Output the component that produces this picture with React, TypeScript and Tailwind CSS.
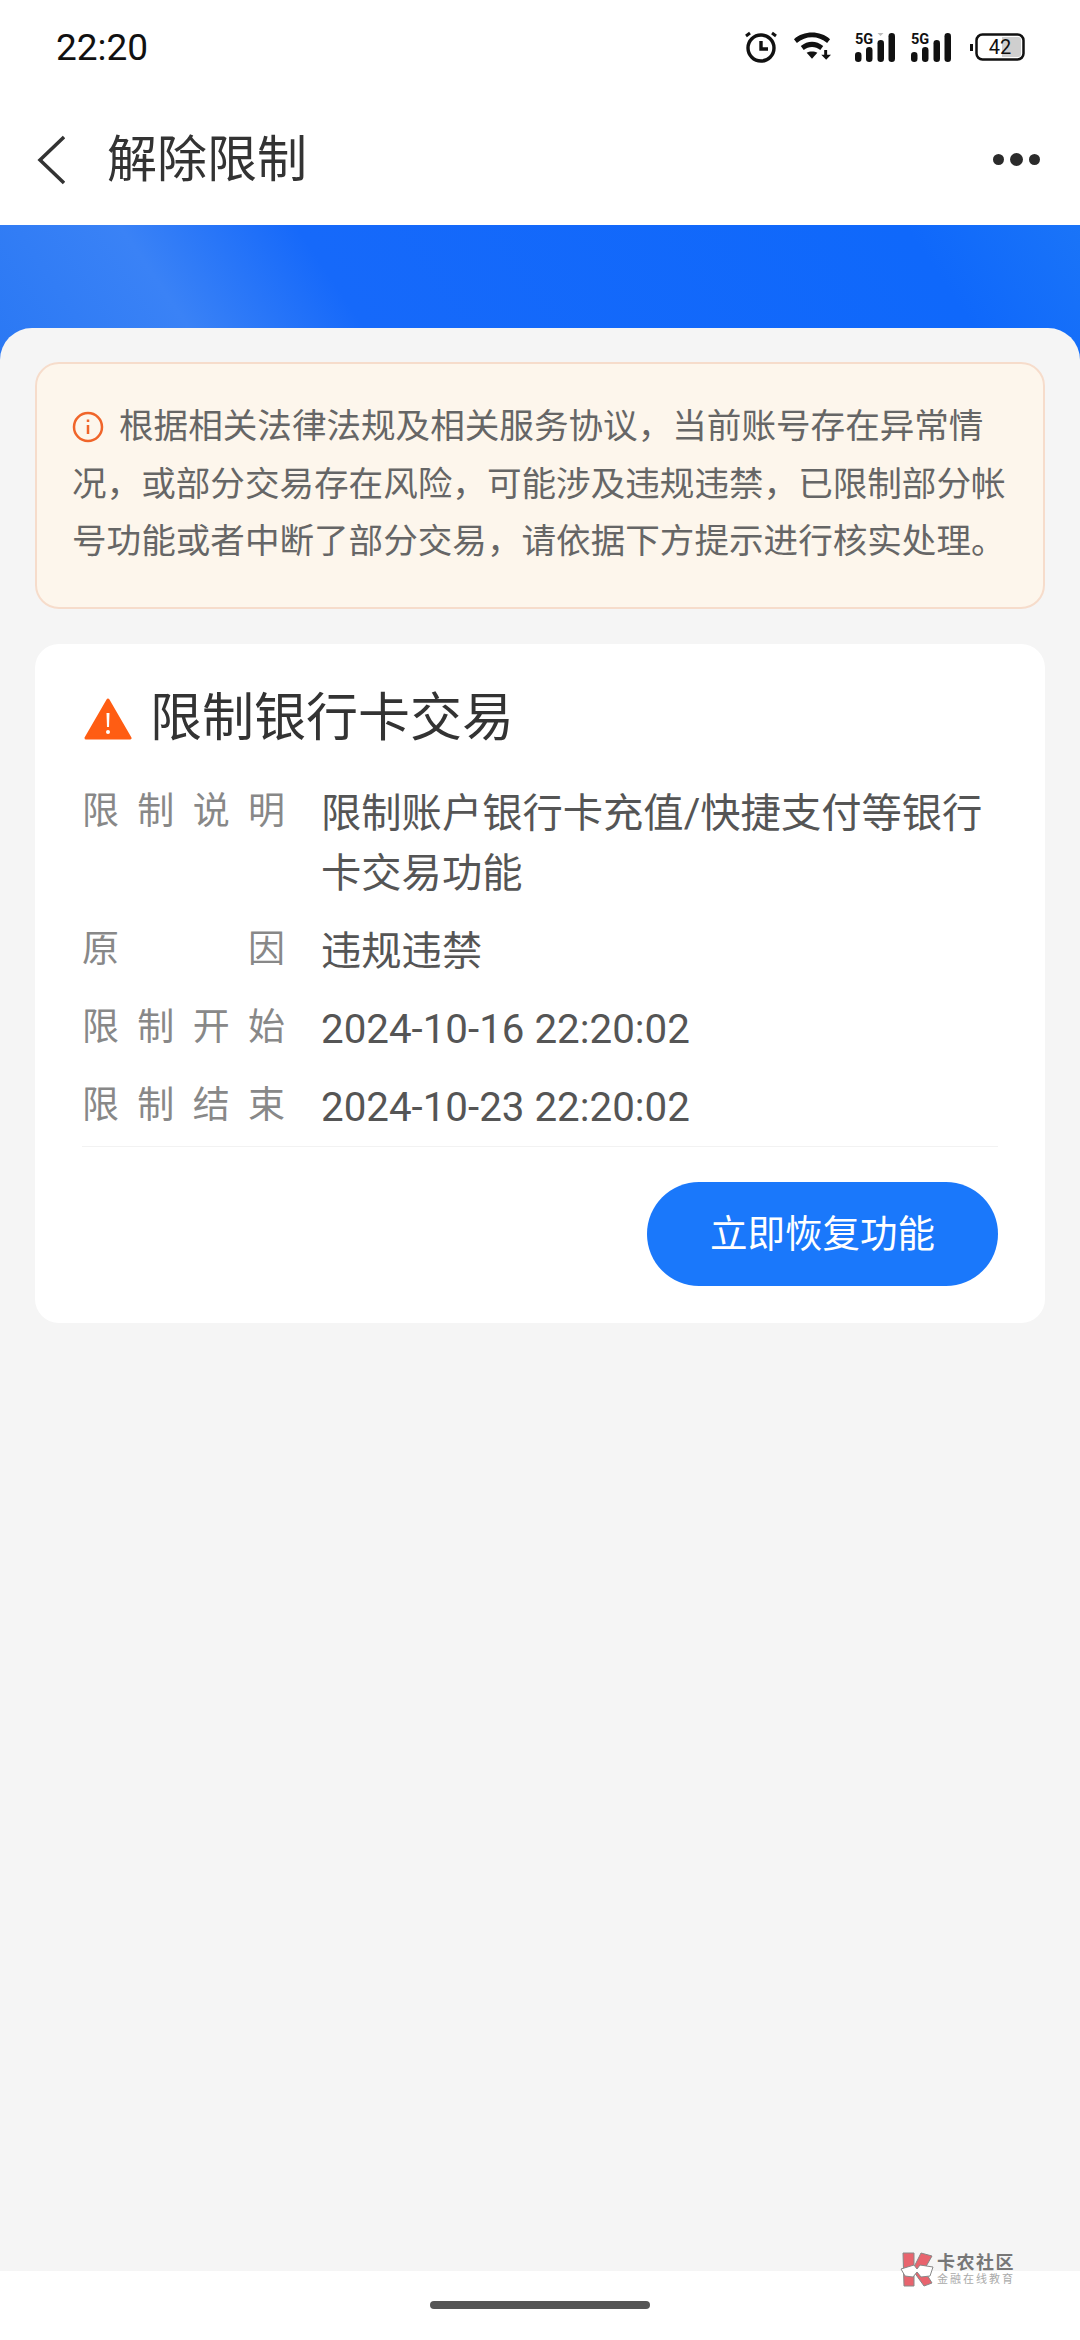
const FONT = "font-['Roboto','Noto_Sans_CJK_SC',sans-serif]";

const ROWS = [
  { label: "限制说明", value: "限制账户银行卡充值/快捷支付等银行卡交易功能" },
  { label: "原因", value: "违规违禁" },
  { label: "限制开始", value: "2024-10-16 22:20:02" },
  { label: "限制结束", value: "2024-10-23 22:20:02" },
];

function Signal({ tri }: { tri?: boolean }) {
  return (
    <svg width="40" height="30" viewBox="0 0 40 30" fill="#111">
      <rect x="0" y="20" width="6.500" height="10" rx="3.200" />
      <rect x="11" y="15" width="6.500" height="15" rx="3.200" />
      <rect x="22.500" y="8" width="6.500" height="22" rx="3.200" />
      <rect x="33.500" y="1" width="6.500" height="29" rx="3.200" />
      {tri && <path d="M22.500 1h6l-3 3z" fill="#bbb" />}
      <text x="0" y="12" fontSize="14.500" fontWeight="700" fontFamily="Roboto">5G</text>
    </svg>
  );
}

function StatusIcons() {
  return (
    <div className="flex items-center">
      <svg width="32" height="32" viewBox="0 0 32 32" fill="none" stroke="#111" className="mr-[16px]">
        <circle cx="16" cy="17" r="13" strokeWidth="3.400" />
        <path d="M16 10v8h7" strokeWidth="3.400" />
        <path d="M1 5l4-3M31 5l-4-3" strokeWidth="3" />
      </svg>
      <svg width="39" height="30" viewBox="0 0 40 30" fill="#111" className="mr-[23px]">
        <path d="M1 7C11-2 28-2 38 7l-3 4C26 3 13 3 4 11z" />
        <path d="M8 14c7-6 16-6 23 0l-3 4c-5-4-12-4-17 0z" />
        <path d="M14 21c3-2 8-2 11 0l-5.500 6z" />
        <path d="M32 18h3v5h4l-5 5-5-5h3z" />
      </svg>
      <Signal tri />
      <div className="w-[16px]" />
      <Signal />
      <div className="w-[19px]" />
      <svg width="55" height="28" viewBox="0 0 55 28" fill="none">
        <rect x="6.500" y="1.500" width="47" height="25" rx="6" stroke="#111" strokeWidth="2.500" />
        <path d="M32 4h16a3 3 0 0 1 3 3v14a3 3 0 0 1-3 3H32z" fill="#cfcfcf" />
        <path d="M0 11h3v7H0z" fill="#111" />
        <text x="30" y="21" textAnchor="middle" fontSize="20" fontFamily="Roboto" fill="#111">42</text>
      </svg>
    </div>
  );
}

function Watermark() {
  return (
    <div className="absolute left-[900px] top-[2252px] flex items-center gap-[1px]">
      <svg width="36" height="36" viewBox="0 0 36 36">
        <path d="M3 1h11v14l7-14 11 3-8 14 8 13-8 3-10-14v14H4z" fill="#e8646e" stroke="#888" strokeWidth="1" />
        <path d="M1 17l13-4 3 4 3-4 13 2-3 9-9 1-4-5-4 5-8-1z" fill="#fff" stroke="#888" strokeWidth="1" />
      </svg>
      <div className="flex flex-col">
        <span className="text-[18px] leading-[20px] font-bold text-[#777] tracking-[1.500px]">卡农社区</span>
        <span className="text-[11px] leading-[14px] text-[#aaa] tracking-[2px]">金融在线教育</span>
      </div>
    </div>
  );
}

export default function App() {
  return (
    <div className={`${FONT} relative w-[1080px] h-[2340px] flex flex-col bg-[#f5f5f5] overflow-hidden`}>
      <div className="h-[94px] bg-white flex items-center justify-between pl-[56px] pr-[55px] shrink-0">
        <span className="text-[37px] text-[#111] leading-none">22:20</span>
        <StatusIcons />
      </div>
      <div className="h-[131px] bg-white flex items-center justify-between pl-[37px] pr-[40px] shrink-0">
        <div className="flex items-center gap-[42px]">
          <svg width="28" height="50" viewBox="0 0 28 50" fill="none" stroke="#333" strokeWidth="3.500">
            <path d="M27 2L3 25l24 23" />
          </svg>
          <span className="text-[50px] leading-none text-[#333]">解除限制</span>
        </div>
        <div className="flex items-center gap-[6px]">
          <div className="w-[11px] h-[11px] rounded-full bg-[#2b2b2b]" />
          <div className="w-[13px] h-[13px] rounded-full bg-[#2b2b2b]" />
          <div className="w-[11px] h-[11px] rounded-full bg-[#2b2b2b]" />
        </div>
      </div>
      <div className="h-[135px] shrink-0 bg-[linear-gradient(56deg,#2a78f4_0%,#3a82f6_18%,#1669fa_33%,#0f68fb_85%,#1a74f8_100%)]" />
      <div className="relative -mt-[32px] flex-1 bg-[#f5f5f5] rounded-t-[32px] px-[35px] pt-[34px] flex flex-col gap-[35px]">
        <div className="h-[247px] rounded-[24px] border-2 border-[#f6dccb] bg-[#fdf6ec] pl-[35px] pr-[30px] pt-[34px] text-[34.600px] leading-[57.500px] text-[#666]">
          <svg width="32" height="32" viewBox="0 0 32 32" fill="none" stroke="#f0652a" strokeWidth="2.500" className="inline-block align-[-5px] mr-[15px]">
            <circle cx="16" cy="16" r="14" />
            <path d="M16 14v9M16 8.500v2.500" />
          </svg>
          根据相关法律法规及相关服务协议，当前账号存在异常情况，或部分交易存在风险，可能涉及违规违禁，已限制部分帐号功能或者中断了部分交易，请依据下方提示进行核实处理。
        </div>
        <div className="h-[679px] rounded-[24px] bg-white px-[47px] pt-[39px]">
          <div className="flex items-center gap-[18px] h-[72px]">
            <svg width="48" height="44" viewBox="0 0 48 44" className="ml-[2px]">
              <path d="M24 3L46 41H2z" fill="#ff5d13" stroke="#ff5d13" strokeWidth="3" strokeLinejoin="round" />
              <path d="M22.500 16h3l-.5 14h-2z" fill="#fff" />
              <circle cx="24" cy="35" r="2" fill="#fff" />
            </svg>
            <span className="text-[52px] leading-none text-[#333]">限制银行卡交易</span>
          </div>
          <div className="mt-[29px] flex flex-col gap-[18px]">
            {ROWS.map((r) => (
              <div key={r.label} className="flex">
                <div className="w-[203px] shrink-0 text-[37px] leading-[56px] text-[#888] [text-align-last:justify]">
                  {r.label.split("").join(" ")}
                </div>
                <div className="ml-[36px] flex-1 text-[40.300px] leading-[60px] text-[#555]">{r.value}</div>
              </div>
            ))}
          </div>
          <div className="mt-[8px] h-px bg-[#f2f2f2]" />
          <div className="mt-[35px] flex justify-end">
            <div className="w-[351px] h-[104px] rounded-full bg-[#1a78fb] flex items-center justify-center text-[37.500px] text-white">
              立即恢复功能
            </div>
          </div>
        </div>
      </div>
      <div className="h-[69px] bg-white shrink-0 flex justify-center pt-[30px]">
        <div className="w-[220px] h-[8px] rounded-full bg-[#555]" />
      </div>
      <Watermark />
    </div>
  );
}
